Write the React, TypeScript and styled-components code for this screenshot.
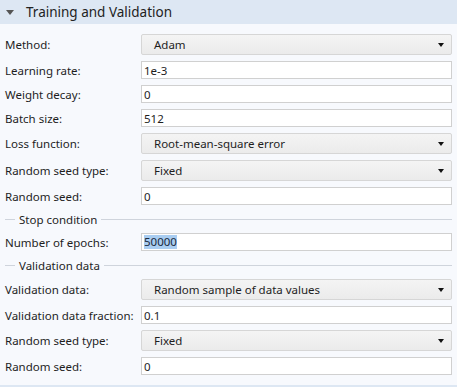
import styled, { createGlobalStyle } from 'styled-components';

const GlobalStyle = createGlobalStyle`
  html, body {
    margin: 0;
    padding: 0;
    background: #f7f9fd;
  }
  body {
    font-family: 'Noto Sans', 'Open Sans', sans-serif;
    font-size: 11.5px;
    color: #1e1e1e;
  }
`;

const Panel = styled.div`
  width: 457px;
  height: 387px;
  box-sizing: border-box;
  background: #f7f9fd;
  border-bottom: 2px solid #dde7f3;
  overflow: hidden;
`;

const Header = styled.div`
  height: 24px;
  display: flex;
  align-items: center;
  gap: 12px;
  padding-left: 6px;
  background: #dde7f3;
  font-size: 13.5px;
  color: #222;
`;

const Caret = styled.span`
  width: 0;
  height: 0;
  border-left: 4px solid transparent;
  border-right: 4px solid transparent;
  border-top: 5px solid #555;
`;

const Body = styled.div`
  padding: 7px 5px 0 5px;
  display: flex;
  flex-direction: column;
`;

const Row = styled.div<{ $select?: boolean }>`
  display: grid;
  grid-template-columns: 136px 1fr;
  align-items: center;
  height: ${(p) => (p.$select ? 27 : 24)}px;
`;

const Label = styled.span`
  white-space: nowrap;
`;

const Select = styled.div`
  height: 21px;
  box-sizing: border-box;
  display: flex;
  align-items: center;
  justify-content: space-between;
  padding: 0 7px 0 12px;
  border: 1px solid #d6d6d6;
  border-radius: 2px;
  background: linear-gradient(#f4f4f4, #ebebeb);
`;

const Arrow = styled.span`
  width: 0;
  height: 0;
  border-left: 3.5px solid transparent;
  border-right: 3.5px solid transparent;
  border-top: 4px solid #111;
`;

const Field = styled.div`
  height: 18px;
  box-sizing: border-box;
  display: flex;
  align-items: center;
  padding: 0 2px;
  border: 1px solid #d0d0d0;
  background: #fff;
`;

const Selected = styled.span`
  background: #a9cdf1;
  color: #1a2a40;
  line-height: 14px;
`;

const Section = styled.div`
  height: 22px;
  display: flex;
  align-items: center;
  gap: 4px;
  &::before {
    content: '';
    width: 10px;
    border-top: 1px solid #cfd4dc;
  }
  &::after {
    content: '';
    flex: 1;
    border-top: 1px solid #cfd4dc;
  }
`;

const SelectRow = ({ label, value }: { label: string; value: string }) => (
  <Row $select>
    <Label>{label}</Label>
    <Select>
      <span>{value}</span>
      <Arrow />
    </Select>
  </Row>
);

const InputRow = ({ label, value, selected }: { label: string; value: string; selected?: boolean }) => (
  <Row>
    <Label>{label}</Label>
    <Field>{selected ? <Selected>{value}</Selected> : value}</Field>
  </Row>
);

const App = () => {
  return (
    <Panel>
      <GlobalStyle />
      <Header>
        <Caret />
        <span>Training and Validation</span>
      </Header>
      <Body>
        <SelectRow label="Method:" value="Adam" />
        <InputRow label="Learning rate:" value="1e-3" />
        <InputRow label="Weight decay:" value="0" />
        <InputRow label="Batch size:" value="512" />
        <SelectRow label="Loss function:" value="Root-mean-square error" />
        <SelectRow label="Random seed type:" value="Fixed" />
        <InputRow label="Random seed:" value="0" />
        <Section>Stop condition</Section>
        <InputRow label="Number of epochs:" value="50000" selected />
        <Section>Validation data</Section>
        <SelectRow label="Validation data:" value="Random sample of data values" />
        <InputRow label="Validation data fraction:" value="0.1" />
        <SelectRow label="Random seed type:" value="Fixed" />
        <InputRow label="Random seed:" value="0" />
      </Body>
    </Panel>
  );
};

export default App;
